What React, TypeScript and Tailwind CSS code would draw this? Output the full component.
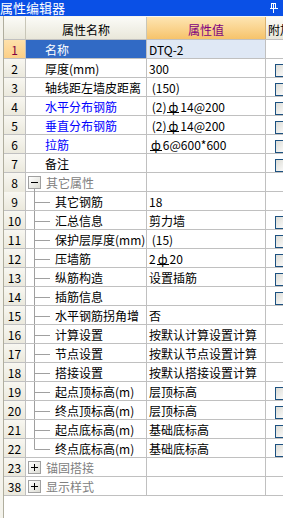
import React from "react";

type Row = {
  n: number;
  name: string;
  value?: React.ReactNode;
  kind?: "top" | "group" | "child";
  blue?: boolean;
  cb?: boolean;
  sel?: boolean;
  open?: boolean;
  last?: boolean;
};

function Bar({ children }: { children: React.ReactNode }) {
  return <span className="mx-[1px] inline-block border-b border-black px-[1px] leading-[10px]">{children}</span>;
}

const ROWS: Row[] = [
  { n: 1, name: "名称", value: "DTQ-2", sel: true },
  { n: 2, name: "厚度(mm)", value: "300", cb: true },
  { n: 3, name: "轴线距左墙皮距离", value: " (150)", cb: true },
  { n: 4, name: "水平分布钢筋", value: <> (2)<Bar>ф</Bar>14@200</>, blue: true, cb: true },
  { n: 5, name: "垂直分布钢筋", value: <> (2)<Bar>ф</Bar>14@200</>, blue: true, cb: true },
  { n: 6, name: "拉筋", value: <><Bar>ф</Bar>6@600*600</>, blue: true, cb: true },
  { n: 7, name: "备注", value: "", cb: true },
  { n: 8, name: "其它属性", kind: "group", open: true },
  { n: 9, name: "其它钢筋", value: "18", kind: "child" },
  { n: 10, name: "汇总信息", value: "剪力墙", kind: "child", cb: true },
  { n: 11, name: "保护层厚度(mm)", value: " (15)", kind: "child", cb: true },
  { n: 12, name: "压墙筋", value: <>2<Bar>ф</Bar>20</>, kind: "child", cb: true },
  { n: 13, name: "纵筋构造", value: "设置插筋", kind: "child", cb: true },
  { n: 14, name: "插筋信息", value: "", kind: "child", cb: true },
  { n: 15, name: "水平钢筋拐角增", value: "否", kind: "child" },
  { n: 16, name: "计算设置", value: "按默认计算设置计算", kind: "child" },
  { n: 17, name: "节点设置", value: "按默认节点设置计算", kind: "child" },
  { n: 18, name: "搭接设置", value: "按默认搭接设置计算", kind: "child" },
  { n: 19, name: "起点顶标高(m)", value: "层顶标高", kind: "child", cb: true },
  { n: 20, name: "终点顶标高(m)", value: "层顶标高", kind: "child", cb: true },
  { n: 21, name: "起点底标高(m)", value: "基础底标高", kind: "child", cb: true },
  { n: 22, name: "终点底标高(m)", value: "基础底标高", kind: "child", cb: true, last: true },
  { n: 23, name: "锚固搭接", kind: "group" },
  { n: 38, name: "显示样式", kind: "group" },
];

function ToggleBox({ open }: { open?: boolean }) {
  return (
    <span className="flex h-[13px] w-[13px] shrink-0 items-center justify-center border border-[#a0a0a0] bg-gradient-to-br from-white to-[#dcdcd4]">
      <svg width="9" height="9" viewBox="0 0 9 9">
        <line x1="1" y1="4.5" x2="8" y2="4.5" stroke="#000" />
        {!open && <line x1="4.5" y1="1" x2="4.5" y2="8" stroke="#000" />}
      </svg>
    </span>
  );
}

function NameCell({ row }: { row: Row }) {
  if (row.sel) {
    return (
      <div className="h-full overflow-hidden border-r border-[#c0c0c0] bg-[#316ac5] pl-[19px] pt-[2px] text-white">
        {row.name}
      </div>
    );
  }
  if (row.kind === "group") {
    return (
      <div className="flex h-full items-start border-r border-[#c0c0c0] pl-[2px]">
        <div className="flex flex-col items-center">
          <div className="mt-[3px]">
            <ToggleBox open={row.open} />
          </div>
          {row.open && <div className="h-[3px] w-px bg-[#a0a0a0]" />}
        </div>
        <span className="ml-[5px] pt-[2px] text-[#808080]">{row.name}</span>
      </div>
    );
  }
  if (row.kind === "child") {
    return (
      <div className="flex h-full items-start border-r border-[#c0c0c0]">
        <svg width="26" height="18" className="shrink-0">
          <line x1="8.5" y1="0" x2="8.5" y2={row.last ? 10.5 : 18} stroke="#a0a0a0" />
          <line x1="8.5" y1="10.5" x2="24" y2="10.5" stroke="#a0a0a0" />
        </svg>
        <span className="ml-[3px] whitespace-nowrap pt-[2px]">{row.name}</span>
      </div>
    );
  }
  return (
    <div
      className={`h-full overflow-hidden whitespace-nowrap border-r border-[#c0c0c0] pl-[19px] pt-[2px] ${
        row.blue ? "text-[#0000ff]" : "text-black"
      }`}
    >
      {row.name}
    </div>
  );
}

function Checkbox() {
  return (
    <div className="ml-[9px] mt-[5px] h-[13px] w-[13px] border border-[#1c5180] bg-gradient-to-br from-[#dcdcd6] to-white" />
  );
}

export default function App() {
  return (
    <div className="h-[518px] w-[283px] overflow-hidden bg-white font-['Noto_Sans_CJK_SC','Liberation_Sans',sans-serif] text-[12px] leading-[16px] text-black">
      <div className="flex h-[16px] items-center justify-between bg-[#0a50e6] pr-[5px] text-white">
        <span className="text-[13px] leading-[14px]">属性编辑器</span>
        <svg width="8" height="10" viewBox="0 0 8 10">
          <rect x="1.5" y="0.5" width="4" height="5" fill="none" stroke="#fff" />
          <line x1="3.5" y1="0.5" x2="3.5" y2="5.5" stroke="#fff" />
          <line x1="0" y1="5.5" x2="8" y2="5.5" stroke="#fff" />
          <line x1="3.5" y1="5.5" x2="3.5" y2="10" stroke="#fff" />
        </svg>
      </div>
      <div className="flex h-[502px]">
        <div className="w-[4px] shrink-0 border-r border-[#b0ae9e] bg-[#f4f3ec]" />
        <div className="flex-1 overflow-hidden">
          <div className="grid h-[24px] w-[302px] grid-cols-[22px_121px_119px_40px] border-b border-t border-b-[#c0c0c0] border-t-[#f6f6f0]">
            <div className="border-r border-[#c8c6b8] bg-gradient-to-b from-[#fbfbf7] to-[#e9e7da]" />
            <div className="flex items-center justify-center border-r border-[#c8c6b8] bg-gradient-to-b from-[#fbfbf7] to-[#e9e7da] pt-[3px]">
              属性名称
            </div>
            <div className="flex items-center justify-center border-r border-[#d8b070] bg-gradient-to-b from-[#fde5b2] to-[#f6c36a] pt-[3px] text-[#800080]">
              属性值
            </div>
            <div className="flex items-center bg-gradient-to-b from-[#fbfbf7] to-[#e9e7da] pl-[2px] pt-[3px]">
              附加
            </div>
          </div>
          {ROWS.map((row) => (
            <div
              key={row.n}
              className="grid h-[19px] w-[302px] grid-cols-[22px_121px_119px_40px] border-b border-[#c0c0c0]"
            >
              <div
                className={`h-full border-r border-[#c0c0c0] pt-[2px] text-center ${
                  row.sel
                    ? "bg-gradient-to-b from-[#fee1ab] to-[#fbcf86] text-[#800040]"
                    : "bg-gradient-to-b from-[#f8f7f1] to-[#ebe9dd]"
                }`}
              >
                {row.n}
              </div>
              <NameCell row={row} />
              <div
                className={`h-full overflow-hidden whitespace-pre border-r border-[#c0c0c0] pl-[2px] pt-[2px] ${
                  row.sel ? "bg-[#dfe8f5]" : ""
                }`}
              >
                {row.value}
              </div>
              <div className="h-full">{row.cb && <Checkbox />}</div>
            </div>
          ))}
        </div>
      </div>
    </div>
  );
}
